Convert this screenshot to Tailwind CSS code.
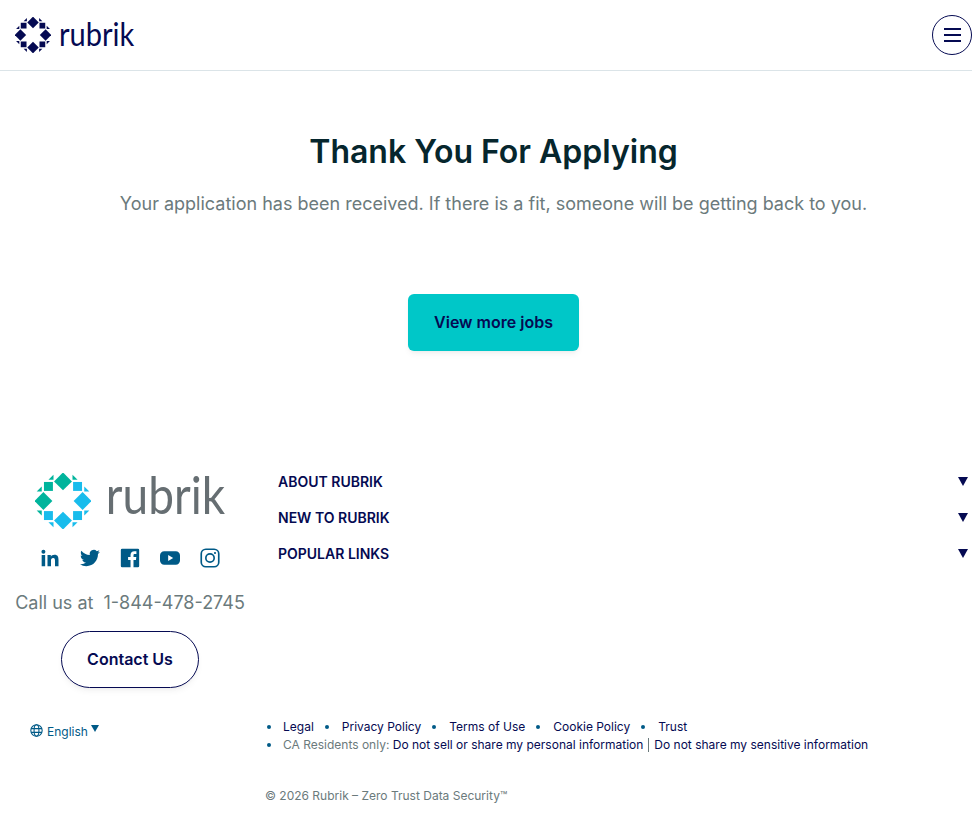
<!DOCTYPE html>
<html lang="en">
  <head>
    <meta charset="UTF-8" />
    <meta name="viewport" content="width=device-width, initial-scale=1.0" />
    <title>Thank You For Applying</title>
    <script src="https://cdn.jsdelivr.net/npm/@tailwindcss/browser@4"></script>
  </head>
  <body class="bg-white font-['Inter',sans-serif] h-[828px] overflow-hidden">
    <!-- Header -->
    <header class="h-[71px] border-b border-[#dbe4e8] flex items-center justify-between pl-[15px]">
      <a href="#" class="flex items-center text-[#050a52]">
        <svg class="w-[36px] h-[36px] mt-[-1px]" viewBox="0 0 100 100" fill="currentColor">
          <path d="M50 -1 66 15 50 31 34 15Z" />
          <path d="M50 69 66 85 50 101 34 85Z" />
          <path d="M-1 50 15 34 31 50 15 66Z" />
          <path d="M69 50 85 34 101 50 85 66Z" />
          <path d="M16 16H32V32H16Z" />
          <path d="M68 16H84V32H68Z" />
          <path d="M16 68H32V84H16Z" />
          <path d="M68 68H84V84H68Z" />
          <path d="M33 3 33 12 24 12Z" />
          <path d="M67 3 76 12 67 12Z" />
          <path d="M3 33 12 24 12 33Z" />
          <path d="M97 33 88 33 88 24Z" />
          <path d="M3 67 12 67 12 76Z" />
          <path d="M97 67 88 76 88 67Z" />
          <path d="M33 97 24 88 33 88Z" />
          <path d="M67 97 67 88 76 88Z" />
        </svg>
        <span class="font-['Lato',sans-serif] text-[29px] leading-none ml-[8px] mt-[-5px] scale-y-[1.14]">rubrik</span>
      </a>
      <button class="w-[40px] h-[40px] rounded-full border border-[#050a52] flex flex-col items-center justify-center gap-[4px] mt-[-1px]">
        <span class="block w-[17px] h-[2px] bg-[#050a52]"></span>
        <span class="block w-[17px] h-[2px] bg-[#050a52]"></span>
        <span class="block w-[17px] h-[2px] bg-[#050a52]"></span>
      </button>
    </header>

    <!-- Confirmation -->
    <main class="pl-[15px] flex flex-col items-center">
      <h1 class="text-[32px] leading-[40px] font-semibold text-[#06262d] mt-[61px]">Thank You For Applying</h1>
      <p class="text-[18px] leading-[28px] text-[#6b7a7c] mt-[18px]">Your application has been received. If there is a fit, someone will be getting back to you.</p>
      <a href="#" class="mt-[76px] w-[171px] h-[57px] pb-[2px] rounded-[6px] bg-[#00c7c8] text-[#050a52] text-[16px] font-semibold flex items-center justify-center shadow-md shadow-black/5">View more jobs</a>
    </main>

    <!-- Footer -->
    <footer class="mt-[122px]">
      <div class="flex">
        <div class="w-[260px] flex flex-col items-center">
          <div class="flex items-center">
            <svg class="w-[56px] h-[56px]" viewBox="0 0 100 100">
              <g fill="#00b49c">
                <path d="M50 -1 66 15 50 31 34 15Z" />
                <path d="M-1 50 15 34 31 50 15 66Z" />
                <path d="M16 16H32V32H16Z" />
                <path d="M33 3 33 12 24 12Z" />
                <path d="M3 33 12 24 12 33Z" />
                <path d="M67 3 76 12 67 12Z" />
                <path d="M3 67 12 67 12 76Z" />
              </g>
              <g fill="#18bcec">
                <path d="M50 69 66 85 50 101 34 85Z" />
                <path d="M69 50 85 34 101 50 85 66Z" />
                <path d="M68 16H84V32H68Z" />
                <path d="M16 68H32V84H16Z" />
                <path d="M68 68H84V84H68Z" />
                <path d="M97 33 88 33 88 24Z" />
                <path d="M97 67 88 76 88 67Z" />
                <path d="M33 97 24 88 33 88Z" />
                <path d="M67 97 67 88 76 88Z" />
              </g>
            </svg>
            <span class="font-['Lato',sans-serif] text-[46px] leading-none text-[#666e72] ml-[15px] mt-[-12px] scale-y-[1.14]">rubrik</span>
          </div>
          <div class="flex items-center gap-[20px] mt-[19px] text-[#005a87]">
            <svg class="w-[20px] h-[20px]" viewBox="0 0 24 24" fill="currentColor"><path d="M2 8.500h4.200V22H2ZM4.100 2a2.400 2.400 0 1 1 0 4.800 2.400 2.400 0 0 1 0-4.800ZM9 8.500h4v1.900c.7-1.200 2.200-2.200 4.300-2.200 4.200 0 4.900 2.700 4.900 6.300V22H18v-6.600c0-1.600 0-3.500-2.200-3.500s-2.600 1.700-2.600 3.400V22H9Z" /></svg>
            <svg class="w-[20px] h-[20px]" viewBox="0 0 24 24" fill="currentColor"><path d="M23.950 4.570a10 10 0 0 1-2.820.770 4.960 4.960 0 0 0 2.160-2.720c-.950.550-2 .950-3.130 1.180a4.920 4.920 0 0 0-8.380 4.480C7.690 8.090 4.070 6.130 1.640 3.160a4.820 4.820 0 0 0-.660 2.470c0 1.710.870 3.210 2.190 4.100a4.900 4.900 0 0 1-2.230-.620v.060a4.920 4.920 0 0 0 3.950 4.830 5 5 0 0 1-2.210.080 4.940 4.940 0 0 0 4.600 3.420A9.870 9.870 0 0 1 0 19.540a14 14 0 0 0 7.560 2.210c9.050 0 14-7.500 14-13.980 0-.210 0-.420-.020-.630a9.940 9.940 0 0 0 2.410-2.570Z" /></svg>
            <svg class="w-[20px] h-[20px]" viewBox="0 0 24 24" fill="currentColor"><path d="M2.500 1h19A1.500 1.500 0 0 1 23 2.500v19a1.500 1.500 0 0 1-1.500 1.500H16.200v-8.700h2.900l.45-3.400H16.200V8.700c0-1 .3-1.650 1.700-1.650h1.800V4c-.3 0-1.400-.13-2.650-.13-2.600 0-4.400 1.600-4.400 4.500v2.530H9.700v3.400h2.950V23H2.500A1.500 1.500 0 0 1 1 21.500v-19A1.500 1.500 0 0 1 2.500 1Z" /></svg>
            <svg class="w-[20px] h-[20px]" viewBox="0 0 24 24" fill="currentColor"><path d="M5 4h14a5 5 0 0 1 5 5v6a5 5 0 0 1-5 5H5a5 5 0 0 1-5-5V9a5 5 0 0 1 5-5Zm4.800 4.500v7l6-3.500Z" /></svg>
            <svg class="w-[20px] h-[20px]" viewBox="0 0 24 24" fill="none" stroke="currentColor" stroke-width="2"><rect x="1.500" y="1.500" width="21" height="21" rx="5.500" /><circle cx="12" cy="12" r="5" /><circle cx="18" cy="6" r="1.300" fill="currentColor" stroke="none" /></svg>
          </div>
          <p class="text-[18px] leading-[24px] text-[#6b7a7c] mt-[23px]">Call us at&nbsp; 1-844-478-2745</p>
          <a href="#" class="mt-[16px] w-[138px] h-[57px] pb-[2px] rounded-full border border-[#050a52] text-[#050a52] text-[16px] font-semibold flex items-center justify-center shadow-md shadow-black/5">Contact Us</a>
        </div>
        <div class="flex-1 pl-[18px] pr-[4px] mt-[-10px]">
          <div class="h-[36px] flex items-center justify-between text-[14px] font-semibold text-[#050a52]"><span>ABOUT RUBRIK</span><span class="w-0 h-0 border-x-[5px] border-x-transparent border-t-[9px] border-t-[#050a52]"></span></div>
          <div class="h-[36px] flex items-center justify-between text-[14px] font-semibold text-[#050a52]"><span>NEW TO RUBRIK</span><span class="w-0 h-0 border-x-[5px] border-x-transparent border-t-[9px] border-t-[#050a52]"></span></div>
          <div class="h-[36px] flex items-center justify-between text-[14px] font-semibold text-[#050a52]"><span>POPULAR LINKS</span><span class="w-0 h-0 border-x-[5px] border-x-transparent border-t-[9px] border-t-[#050a52]"></span></div>
        </div>
      </div>

      <div class="flex mt-[30px]">
        <div class="w-[266px] pl-[30px] pt-[5px] flex items-start text-[12px] leading-[18px] text-[#005a87]">
          <svg class="w-[13px] h-[13px] mt-[1px] mr-[4px]" viewBox="0 0 24 24" fill="none" stroke="currentColor" stroke-width="2"><circle cx="12" cy="12" r="10.500" /><ellipse cx="12" cy="12" rx="4.500" ry="10.500" /><path d="M2 8.500h20M2 15.500h20" /></svg>
          <span>English</span>
          <span class="w-0 h-0 ml-[3px] mt-[2px] border-x-[4px] border-x-transparent border-t-[7px] border-t-[#005a87]"></span>
        </div>
        <div class="text-[12px] leading-[18px] text-[#050a52]">
          <div class="flex items-center">
            <span class="w-[4px] h-[4px] rounded-full bg-[#005a87] ml-[1px] mr-[12px]"></span><a href="#">Legal</a>
            <span class="w-[4px] h-[4px] rounded-full bg-[#005a87] ml-[11px] mr-[13px]"></span><a href="#">Privacy Policy</a>
            <span class="w-[4px] h-[4px] rounded-full bg-[#005a87] ml-[11px] mr-[13px]"></span><a href="#">Terms of Use</a>
            <span class="w-[4px] h-[4px] rounded-full bg-[#005a87] ml-[11px] mr-[13px]"></span><a href="#">Cookie Policy</a>
            <span class="w-[4px] h-[4px] rounded-full bg-[#005a87] ml-[11px] mr-[13px]"></span><a href="#">Trust</a>
          </div>
          <div class="flex items-center">
            <span class="w-[4px] h-[4px] rounded-full bg-[#005a87] ml-[1px] mr-[12px]"></span>
            <span class="text-[#6b7a7c]">CA Residents only:&nbsp;</span><a href="#">Do not sell or share my personal information</a>
            <span class="w-px h-[14px] bg-[#6b7a7c] mx-[5px]"></span><a href="#">Do not share my sensitive information</a>
          </div>
        </div>
      </div>

      <p class="pl-[265px] mt-[33px] text-[12px] leading-[18px] text-[#6b7a7c]">© 2026 Rubrik – Zero Trust Data Security™</p>
    </footer>
  </body>
</html>
